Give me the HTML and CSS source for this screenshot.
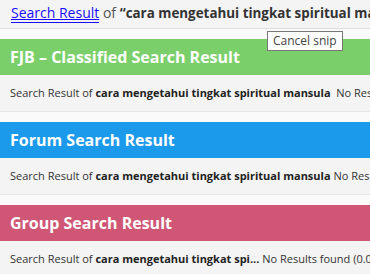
FILE: index.html
```html
<!DOCTYPE html>
<html lang="en">
<head>
  <meta charset="UTF-8">
  <meta name="viewport" content="width=device-width, initial-scale=1.0">
  <title>Search Result</title>
  <link rel="stylesheet" href="styles.css">
</head>
<body>
  <div class="page">
    <div class="topbar">
      <a href="#" class="crumb">Search Result</a> of <strong>“cara mengetahui tingkat spiritual mansula”</strong>
    </div>

    <div class="section">
      <div class="section-title green">FJB – Classified Search Result</div>
      <div class="section-row">Search Result of <strong>cara mengetahui tingkat spiritual mansula</strong>&nbsp; No Results found (0.01 seconds)</div>
    </div>

    <div class="section">
      <div class="section-title blue">Forum Search Result</div>
      <div class="section-row">Search Result of <strong>cara mengetahui tingkat spiritual mansula</strong> No Results found (0.01 seconds)</div>
    </div>

    <div class="section">
      <div class="section-title pink">Group Search Result</div>
      <div class="section-row">Search Result of <strong>cara mengetahui tingkat spi...</strong> No Results found (0.01 seconds)</div>
    </div>

    <div class="tooltip">Cancel snip</div>
  </div>
</body>
</html>
```

FILE: styles.css
```css
:root {
  --color-bg: #fafafa;
  --color-row: #f4f4f4;
  --color-line: #dedede;
  --color-text: #333;
  --color-green: #7bcf6b;
  --color-blue: #1b99eb;
  --color-pink: #cf5675;
}

body {
  margin: 0;
  font-family: "Open Sans", "Liberation Sans", sans-serif;
  background-color: var(--color-bg);
  color: var(--color-text);
  overflow: hidden;
}

.page {
  position: relative;
  width: 370px;
  height: 274px;
  overflow: hidden;
  white-space: nowrap;
}

.topbar {
  height: 28px;
  line-height: 26px;
  padding-left: 11px;
  font-size: 14px;
  color: #555;
  background-color: var(--color-row);
  border-bottom: 1px solid var(--color-line);
}

.topbar strong {
  font-size: 13.4px;
  color: #333;
}

.crumb {
  color: #1a0dff;
  text-decoration: underline;
  border-bottom: 1px solid #1a0dff;
}

.section {
  margin-top: 10px;
}

.section-title {
  height: 36px;
  line-height: 36px;
  padding-left: 10px;
  font-size: 16px;
  font-weight: bold;
  color: #fff;
}

.green { background-color: var(--color-green); }
.blue { background-color: var(--color-blue); }
.pink { background-color: var(--color-pink); }

.section-row {
  height: 36px;
  line-height: 36px;
  padding-left: 10px;
  font-size: 11px;
  background-color: var(--color-row);
  border-bottom: 1px solid #e6e6e6;
}

.section-row strong {
  color: #222;
}

.tooltip {
  position: absolute;
  left: 267px;
  top: 31px;
  padding: 1px 5px;
  font-size: 12px;
  line-height: 16px;
  color: #444;
  background-color: #fff;
  border: 1px solid #777;
}
```
